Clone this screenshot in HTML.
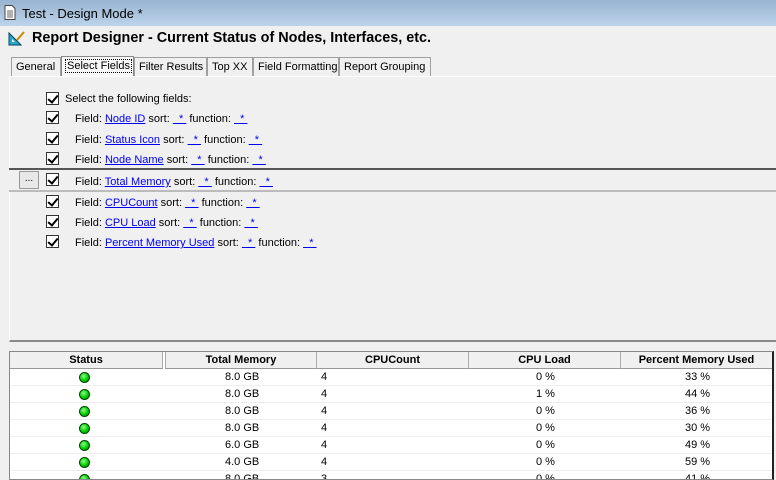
<!DOCTYPE html>
<html style="overflow:hidden"><head><style>
*{margin:0;padding:0;box-sizing:border-box}
html,body{width:776px;height:480px;overflow:hidden}
body{background:#f0f0f0;font-family:"Liberation Sans",Arial,sans-serif;font-size:11px;color:#000;position:relative}
.abs{position:absolute}
.title{left:0;top:0;width:776px;height:26px;background:linear-gradient(#99b4d1,#bcd3ea);}
.title span{position:absolute;left:22px;top:6px;font-size:13px;color:#000}
.hdr{left:32px;top:30px;font-size:14.4px;font-weight:bold;white-space:nowrap}
.tab{top:57px;height:19px;border:1px solid #a0a0a0;border-bottom:none;background:#f0f0f0;padding:3px 4px 0;font-size:11px;white-space:nowrap}
.tab.sel{top:56px;height:21px;background:#f7f7f7;border-color:#888}
.tab.sel span{outline:1px dotted #000;padding:0 1px}
.panel{left:9px;top:76px;width:768px;height:266px;border-top:1px solid #fff;border-left:1px solid #fff;border-bottom:2px solid #8a8a8a}
.cb{width:13px;height:13px;border:1px solid #333;background:#fff}
.cb:after{content:"";position:absolute;left:3px;top:0px;width:4px;height:8px;border:solid #000;border-width:0 2px 2px 0;transform:rotate(40deg)}
.row{left:75px;white-space:nowrap}
a{color:#0000ee;text-decoration:underline}
.tbl{left:9px;top:351px;width:765px;height:129px;background:#fff;border:1px solid #888;border-right:2px solid #222;overflow:hidden}
.th{top:0;height:17px;background:#f0f0f0;border-right:1px solid #aaa;border-bottom:1px solid #999;font-weight:bold;text-align:center;line-height:16px}
.tr{left:0;width:763px;height:17px;border-bottom:1px solid #eee}
.c{position:absolute;top:2px}
.dot{position:absolute;left:69px;top:3px;width:11px;height:11px;border-radius:50%;background:radial-gradient(circle at 40% 35%,#8f8,#0c0 55%,#070);border:1px solid #040}
</style></head><body>
<div class="abs title">
<svg style="position:absolute;left:4px;top:5px" width="12" height="15"><path d="M1 .5h7l3 3v11H1z" fill="#fff" stroke="#444"/><path d="M3 6h6M3 8h6M3 10h6M3 12h6" stroke="#666"/></svg>
<span>Test - Design Mode *</span></div>
<svg class="abs" style="left:8px;top:30px" width="18" height="16"><path d="M1 15V3l12 12z" fill="#2aa8c8" stroke="#046"/><path d="M4 12V9l3 3z" fill="#fff"/><path d="M9 10l7-8" stroke="#c80" stroke-width="2"/></svg>
<div class="abs hdr">Report Designer - Current Status of Nodes, Interfaces, etc.</div>
<div class="abs tab" style="left:11px;width:50px">General</div>
<div class="abs tab sel" style="left:61px;width:73px"><span>Select Fields</span></div>
<div class="abs tab" style="left:134px;width:73px">Filter Results</div>
<div class="abs tab" style="left:207px;width:46px">Top XX</div>
<div class="abs tab" style="left:253px;width:86px">Field Formatting</div>
<div class="abs tab" style="left:339px;width:92px">Report Grouping</div>
<div class="abs panel"></div>
<div class="abs" style="left:9px;top:168px;width:767px;height:24px;border-top:2px solid #555;border-bottom:2px solid #bbb;background:#f0f0f0"></div>
<div class="abs" style="left:19px;top:171px;width:20px;height:18px;border:1px solid #999;background:#e8e8e8;text-align:center;font-size:10px;line-height:14px">...</div>

<div class="abs cb" style="left:46px;top:92px"></div><div class="abs row" style="left:65px;top:93px">Select the following fields:</div>
<div class="abs cb" style="left:46px;top:111px"></div><div class="abs row" style="top:113px">Field: <a>Node ID</a> sort: <a>&nbsp;&nbsp;*&nbsp;</a> function: <a>&nbsp;&nbsp;*&nbsp;</a></div>
<div class="abs cb" style="left:46px;top:132px"></div><div class="abs row" style="top:134px">Field: <a>Status Icon</a> sort: <a>&nbsp;&nbsp;*&nbsp;</a> function: <a>&nbsp;&nbsp;*&nbsp;</a></div>
<div class="abs cb" style="left:46px;top:152px"></div><div class="abs row" style="top:154px">Field: <a>Node Name</a> sort: <a>&nbsp;&nbsp;*&nbsp;</a> function: <a>&nbsp;&nbsp;*&nbsp;</a></div>
<div class="abs cb" style="left:46px;top:173px"></div><div class="abs row" style="top:176px">Field: <a>Total Memory</a> sort: <a>&nbsp;&nbsp;*&nbsp;</a> function: <a>&nbsp;&nbsp;*&nbsp;</a></div>
<div class="abs cb" style="left:46px;top:195px"></div><div class="abs row" style="top:197px">Field: <a>CPUCount</a> sort: <a>&nbsp;&nbsp;*&nbsp;</a> function: <a>&nbsp;&nbsp;*&nbsp;</a></div>
<div class="abs cb" style="left:46px;top:215px"></div><div class="abs row" style="top:217px">Field: <a>CPU Load</a> sort: <a>&nbsp;&nbsp;*&nbsp;</a> function: <a>&nbsp;&nbsp;*&nbsp;</a></div>
<div class="abs cb" style="left:46px;top:235px"></div><div class="abs row" style="top:237px">Field: <a>Percent Memory Used</a> sort: <a>&nbsp;&nbsp;*&nbsp;</a> function: <a>&nbsp;&nbsp;*&nbsp;</a></div>

<div class="abs tbl">
<div class="abs th" style="left:0;width:153px">Status</div>
<div class="abs th" style="left:155px;width:152px;border-left:1px solid #aaa">Total Memory</div>
<div class="abs th" style="left:307px;width:152px">CPUCount</div>
<div class="abs th" style="left:459px;width:152px">CPU Load</div>
<div class="abs th" style="left:611px;width:152px">Percent Memory Used</div>
<div class="abs tr" style="top:17px"><i class="dot"></i><span class="c" style="left:215px">8.0 GB</span><span class="c" style="left:311px">4</span><span class="c" style="left:526px">0 %</span><span class="c" style="left:675px">33 %</span></div>
<div class="abs tr" style="top:34px"><i class="dot"></i><span class="c" style="left:215px">8.0 GB</span><span class="c" style="left:311px">4</span><span class="c" style="left:526px">1 %</span><span class="c" style="left:675px">44 %</span></div>
<div class="abs tr" style="top:51px"><i class="dot"></i><span class="c" style="left:215px">8.0 GB</span><span class="c" style="left:311px">4</span><span class="c" style="left:526px">0 %</span><span class="c" style="left:675px">36 %</span></div>
<div class="abs tr" style="top:68px"><i class="dot"></i><span class="c" style="left:215px">8.0 GB</span><span class="c" style="left:311px">4</span><span class="c" style="left:526px">0 %</span><span class="c" style="left:675px">30 %</span></div>
<div class="abs tr" style="top:85px"><i class="dot"></i><span class="c" style="left:215px">6.0 GB</span><span class="c" style="left:311px">4</span><span class="c" style="left:526px">0 %</span><span class="c" style="left:675px">49 %</span></div>
<div class="abs tr" style="top:102px"><i class="dot"></i><span class="c" style="left:215px">4.0 GB</span><span class="c" style="left:311px">4</span><span class="c" style="left:526px">0 %</span><span class="c" style="left:675px">59 %</span></div>
<div class="abs tr" style="top:119px"><i class="dot"></i><span class="c" style="left:215px">8.0 GB</span><span class="c" style="left:311px">3</span><span class="c" style="left:526px">0 %</span><span class="c" style="left:675px">41 %</span></div>
</div>
</body></html>
